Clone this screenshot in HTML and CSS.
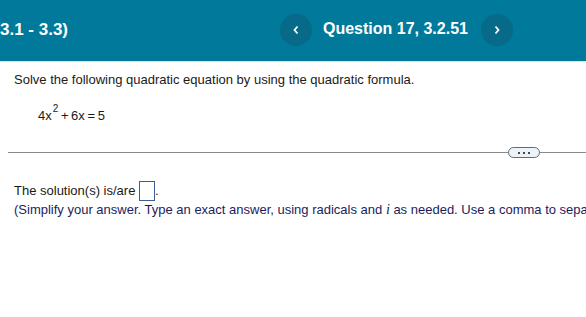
FILE: index.html
```html
<!DOCTYPE html>
<html>
<head>
<meta charset="utf-8">
<link rel="stylesheet" href="styles.css">
</head>
<body>
<header class="topbar">
  <div class="title"><span>Section 3 (3.1 - 3.3)</span></div>
  <div class="nav">
    <button class="circle" aria-label="Previous">
      <svg width="8" height="10" viewBox="0 0 8 10"><path d="M5.5 1.5 L2.5 5 L5.5 8.5" fill="none" stroke="#fff" stroke-width="1.8"/></svg>
    </button>
    <span class="qlabel">Question 17, 3.2.51</span>
    <button class="circle" aria-label="Next">
      <svg width="8" height="10" viewBox="0 0 8 10"><path d="M2.5 1.5 L5.5 5 L2.5 8.5" fill="none" stroke="#fff" stroke-width="1.8"/></svg>
    </button>
  </div>
</header>
<main class="content">
  <p class="prompt">Solve the following quadratic equation by using the quadratic formula.</p>
  <p class="equation">4x<sup>2</sup> + 6x = 5</p>
  <div class="divider">
    <span class="pill"><i></i><i></i><i></i></span>
  </div>
  <p class="answer">The solution(s) is/are <span class="box"></span>.</p>
  <p class="hint">(Simplify your answer. Type an exact answer, using radicals and <em>i</em> as needed. Use a comma to separate answers as needed.)</p>
</main>
</body>
</html>
```
FILE: styles.css
```css
html, body {
  margin: 0;
  padding: 0;
  background: #fff;
  overflow: hidden;
  width: 586px;
  height: 317px;
}
body {
  font-family: "Liberation Sans", Arial, sans-serif;
  color: #1a1a1a;
}
.topbar {
  height: 61px;
  background: #00799a;
  border-bottom: 1px solid #cfe6ee;
  display: flex;
  align-items: center;
  color: #fff;
}
.title {
  width: 68px;
  flex: none;
  display: flex;
  justify-content: flex-end;
  overflow: hidden;
  white-space: nowrap;
  font-weight: bold;
  font-size: 17px;
  margin-top: -2px;
}
.nav {
  display: flex;
  align-items: center;
  margin-left: 212px;
  margin-top: -1px;
}
.circle {
  width: 32px;
  height: 32px;
  border-radius: 50%;
  border: none;
  background: #066a88;
  padding: 0;
  display: flex;
  align-items: center;
  justify-content: center;
}
.qlabel {
  font-weight: bold;
  font-size: 16px;
  margin: 0 13px 0 11px;
  margin-top: -2px;
}
.content {
  padding: 0 0 0 14px;
  font-size: 13px;
}
.prompt {
  margin: 10px 0 0;
  line-height: 16px;
}
.equation {
  margin: 20px 0 0 24px;
  line-height: 16px;
  word-spacing: -1px;
}
.equation sup {
  font-size: 10px;
  vertical-align: 0;
  position: relative;
  top: -8px;
  margin-left: 1px;
}
.divider {
  margin: 27px 0 0 -6px;
  height: 1px;
  background: #8a8a8a;
  position: relative;
}
.pill {
  position: absolute;
  left: 500px;
  top: -5px;
  width: 30px;
  height: 9px;
  border: 1px solid #5c6b7a;
  border-radius: 6px;
  background: #eef3f8;
  display: flex;
  align-items: center;
  justify-content: center;
  gap: 3px;
}
.pill i {
  width: 2px;
  height: 2px;
  background: #3d4c5c;
  display: block;
}
.answer {
  margin: 28px 0 0;
  line-height: 20px;
  white-space: nowrap;
}
.box {
  display: inline-block;
  width: 14px;
  height: 18px;
  border: 1px solid #3b5f94;
  vertical-align: -6px;
}
.hint {
  margin: 1px 0 0;
  line-height: 16px;
  white-space: nowrap;
  color: #1c1c5c;
}
.hint em {
  font-family: "Liberation Serif", "Times New Roman", serif;
  font-style: italic;
  font-size: 14px;
}
```
